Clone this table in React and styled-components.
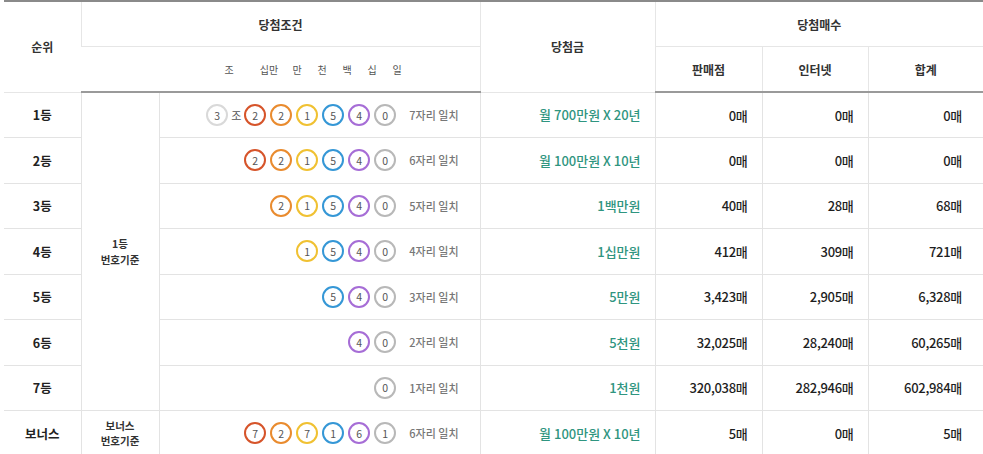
import React from "react";
import styled, { createGlobalStyle } from "styled-components";

const GlobalStyle = createGlobalStyle`
  html, body {
    margin: 0;
    padding: 0;
    background: #fff;
  }
  body {
    font-family: "Noto Sans CJK KR", "Noto Sans", sans-serif;
    color: #222;
  }
`;

const Wrapper = styled.div`
  padding-left: 4px;
  width: 979px;
  overflow: hidden;
`;

const Table = styled.table`
  width: 979px;
  table-layout: fixed;
  border-collapse: collapse;
  border-top: 2px solid #8a8a8a;
`;

const HeadCell = styled.th`
  height: 44px;
  padding: 0;
  font-size: 12px;
  font-weight: 700;
  color: #333;
  text-align: center;
  vertical-align: middle;
  border-left: 1px solid #e6e6e6;
  border-bottom: 1px solid #e6e6e6;

  &:first-child {
    border-left: none;
  }
`;

const HeadRow = styled.tr`
  &.last th {
    border-bottom: 2px solid #9a9a9a;
  }
`;

const PlaceRow = styled.div`
  display: flex;
  align-items: center;
  justify-content: flex-end;
  padding-right: 70px;
  font-size: 10px;
  font-weight: 400;
  color: #555;
`;

const PlaceLabel = styled.span`
  width: 25px;
  text-align: center;
  margin-right: ${(p) => p.$gap || 0}px;
`;

const BodyRow = styled.tr`
  height: 45.5px;
`;

const Cell = styled.td`
  padding: 0 ${(p) => p.$pad ?? 14}px 0 0;
  border-left: 1px solid #e3e3e3;
  border-bottom: 1px solid #e3e3e3;
  vertical-align: middle;
  text-align: ${(p) => p.$align || "right"};
  font-size: 13px;
  white-space: nowrap;
`;

const RankCell = styled(Cell)`
  border-left: none;
  padding: 0;
  text-align: center;
  font-size: 12.5px;
  font-weight: 700;
  color: #222;
`;

const BasisCell = styled(Cell)`
  padding: 0;
  text-align: center;
  font-size: 10.5px;
  font-weight: 700;
  line-height: 15.5px;
  color: #333;
`;

const PrizeCell = styled(Cell)`
  color: #2f9580;
  font-weight: 500;
`;

const CountCell = styled(Cell)`
  color: #1e1e1e;
  font-weight: 500;
  letter-spacing: -0.3px;
`;

const BallLine = styled.div`
  display: flex;
  align-items: center;
  justify-content: flex-end;
  gap: 4px;
  padding-right: 21px;
`;

const Ball = styled.span`
  box-sizing: border-box;
  flex-shrink: 0;
  width: 22px;
  height: 22px;
  border-radius: 50%;
  border: 2px solid ${(p) => p.$color};
  display: inline-flex;
  align-items: center;
  justify-content: center;
  font-size: 10.5px;
  color: #555;
`;

const Jo = styled.span`
  font-size: 11px;
  color: #555;
  margin: 0 -1px;
`;

const MatchText = styled.span`
  margin-left: 9px;
  font-size: 11px;
  color: #777;
  font-weight: 500;
`;

const PLACE_COLORS = ["#d6542a", "#e98b2e", "#f0c132", "#3597d6", "#a66dd6", "#b8b8b8"];
const JO_COLOR = "#d9d9d9";

const rows = [
  { rank: "1등", jo: "3", digits: "221540", prize: "월 700만원 X 20년", store: "0매", online: "0매", total: "0매" },
  { rank: "2등", digits: "221540", prize: "월 100만원 X 10년", store: "0매", online: "0매", total: "0매" },
  { rank: "3등", digits: "21540", prize: "1백만원", store: "40매", online: "28매", total: "68매" },
  { rank: "4등", digits: "1540", prize: "1십만원", store: "412매", online: "309매", total: "721매" },
  { rank: "5등", digits: "540", prize: "5만원", store: "3,423매", online: "2,905매", total: "6,328매" },
  { rank: "6등", digits: "40", prize: "5천원", store: "32,025매", online: "28,240매", total: "60,265매" },
  { rank: "7등", digits: "0", prize: "1천원", store: "320,038매", online: "282,946매", total: "602,984매" },
  { rank: "보너스", digits: "727161", prize: "월 100만원 X 10년", store: "5매", online: "0매", total: "5매", bonus: true },
];

function Balls({ jo, digits }) {
  const offset = 6 - digits.length;
  const count = digits.length + (jo ? 1 : 0);
  return (
    <BallLine>
      {jo && (
        <>
          <Ball $color={JO_COLOR}>{jo}</Ball>
          <Jo>조</Jo>
        </>
      )}
      {digits.split("").map((d, i) => (
        <Ball key={i} $color={PLACE_COLORS[offset + i]}>
          {d}
        </Ball>
      ))}
      <MatchText>{count}자리 일치</MatchText>
    </BallLine>
  );
}

export default function App() {
  return (
    <Wrapper>
      <GlobalStyle />
      <Table>
        <colgroup>
          <col style={{ width: 77 }} />
          <col style={{ width: 78 }} />
          <col style={{ width: 321 }} />
          <col style={{ width: 175 }} />
          <col style={{ width: 107 }} />
          <col style={{ width: 106 }} />
          <col />
        </colgroup>
        <thead>
          <HeadRow>
            <HeadCell rowSpan={2}>순위</HeadCell>
            <HeadCell colSpan={2}>당첨조건</HeadCell>
            <HeadCell rowSpan={2}>당첨금</HeadCell>
            <HeadCell colSpan={3}>당첨매수</HeadCell>
          </HeadRow>
          <HeadRow className="last">
            <HeadCell colSpan={2}>
              <PlaceRow>
                <PlaceLabel $gap={15}>조</PlaceLabel>
                <PlaceLabel $gap={3}>십만</PlaceLabel>
                <PlaceLabel>만</PlaceLabel>
                <PlaceLabel>천</PlaceLabel>
                <PlaceLabel>백</PlaceLabel>
                <PlaceLabel>십</PlaceLabel>
                <PlaceLabel>일</PlaceLabel>
              </PlaceRow>
            </HeadCell>
            <HeadCell>판매점</HeadCell>
            <HeadCell>인터넷</HeadCell>
            <HeadCell>합계</HeadCell>
          </HeadRow>
        </thead>
        <tbody>
          {rows.map((r, i) => (
            <BodyRow key={r.rank}>
              <RankCell>{r.rank}</RankCell>
              {i === 0 && (
                <BasisCell rowSpan={7}>
                  1등
                  <br />
                  번호기준
                </BasisCell>
              )}
              {r.bonus && (
                <BasisCell>
                  보너스
                  <br />
                  번호기준
                </BasisCell>
              )}
              <Cell $pad={0}>
                <Balls jo={r.jo} digits={r.digits} />
              </Cell>
              <PrizeCell>{r.prize}</PrizeCell>
              <CountCell>{r.store}</CountCell>
              <CountCell>{r.online}</CountCell>
              <CountCell $pad={21}>{r.total}</CountCell>
            </BodyRow>
          ))}
        </tbody>
      </Table>
    </Wrapper>
  );
}
